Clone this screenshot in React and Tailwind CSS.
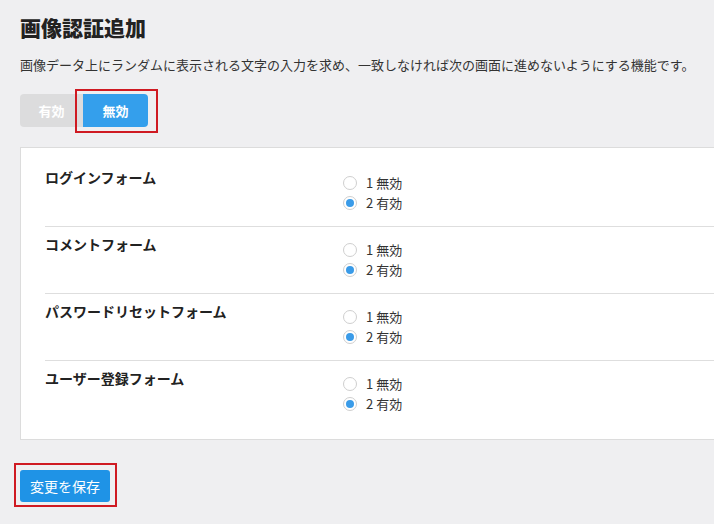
import React, { useState } from 'react';

const forms = ['ログインフォーム', 'コメントフォーム', 'パスワードリセットフォーム', 'ユーザー登録フォーム'];

const Radio = ({ checked, label }) => (
    <label className="flex items-center h-[20px] cursor-pointer">
        <span className="w-[14px] h-[14px] rounded-full border border-[#cfcfcf] bg-white flex items-center justify-center">
            {checked && <span className="w-[8px] h-[8px] rounded-full bg-[#3a9be8]"></span>}
        </span>
        <span className="ml-[9px] text-[13px] text-[#333]">{label}</span>
    </label>
);

const App = () => {
    const [enabled, setEnabled] = useState(false);

    return (
        <div
            className="w-[714px] h-[524px] overflow-hidden bg-[#efeff1] pl-[20px]"
            style={{ fontFamily: '"Noto Sans CJK JP", "Noto Sans", sans-serif' }}
        >
            <h1 className="mt-[12px] h-[30px] leading-[30px] text-[21px] font-black text-[#222]">画像認証追加</h1>
            <p className="mt-[13px] h-[20px] leading-[20px] text-[13px] text-[#333] whitespace-nowrap">
                画像データ上にランダムに表示される文字の入力を求め、一致しなければ次の画面に進めないようにする機能です。
            </p>

            {/* 有効 / 無効 */}
            <div className="mt-[19px] flex">
                <button
                    onClick={() => setEnabled(true)}
                    className="w-[63px] h-[33px] rounded-l-[4px] bg-[#dcdcdd] text-white text-[13px] font-bold"
                >
                    有効
                </button>
                <div className="relative">
                    <button
                        onClick={() => setEnabled(false)}
                        className="w-[65px] h-[33px] rounded-r-[4px] bg-[#349fec] text-white text-[13px] font-bold"
                    >
                        無効
                    </button>
                    <div className="absolute -left-[8px] -top-[5px] w-[83px] h-[44px] border-2 border-[#cf1a22] pointer-events-none"></div>
                </div>
            </div>

            {/* フォーム一覧 */}
            <div className="mt-[20px] w-[740px] bg-white border border-[#dcdcdc] pl-[24px] pt-[12px] pb-[12px]">
                {forms.map((name, i) => (
                    <div
                        key={name}
                        className={`flex pt-3 pb-[13px] ${i < forms.length - 1 ? 'border-b border-[#dedede]' : ''}`}
                    >
                        <div className="w-[298px] -mt-[2px] text-[14px] leading-[14px] font-bold text-[#222]">{name}</div>
                        <div className="pt-[1px]">
                            <Radio checked={false} label="1 無効" />
                            <Radio checked={true} label="2 有効" />
                        </div>
                    </div>
                ))}
            </div>

            {/* 保存 */}
            <div className="relative mt-[30px] w-[90px]">
                <button className="w-[90px] h-[32px] rounded-[3px] bg-[#1f93e6] text-white text-[14px]">変更を保存</button>
                <div className="absolute -left-[6px] -top-[7px] w-[103px] h-[44px] border-2 border-[#cf1a22] pointer-events-none"></div>
            </div>
        </div>
    );
};

export default App;
